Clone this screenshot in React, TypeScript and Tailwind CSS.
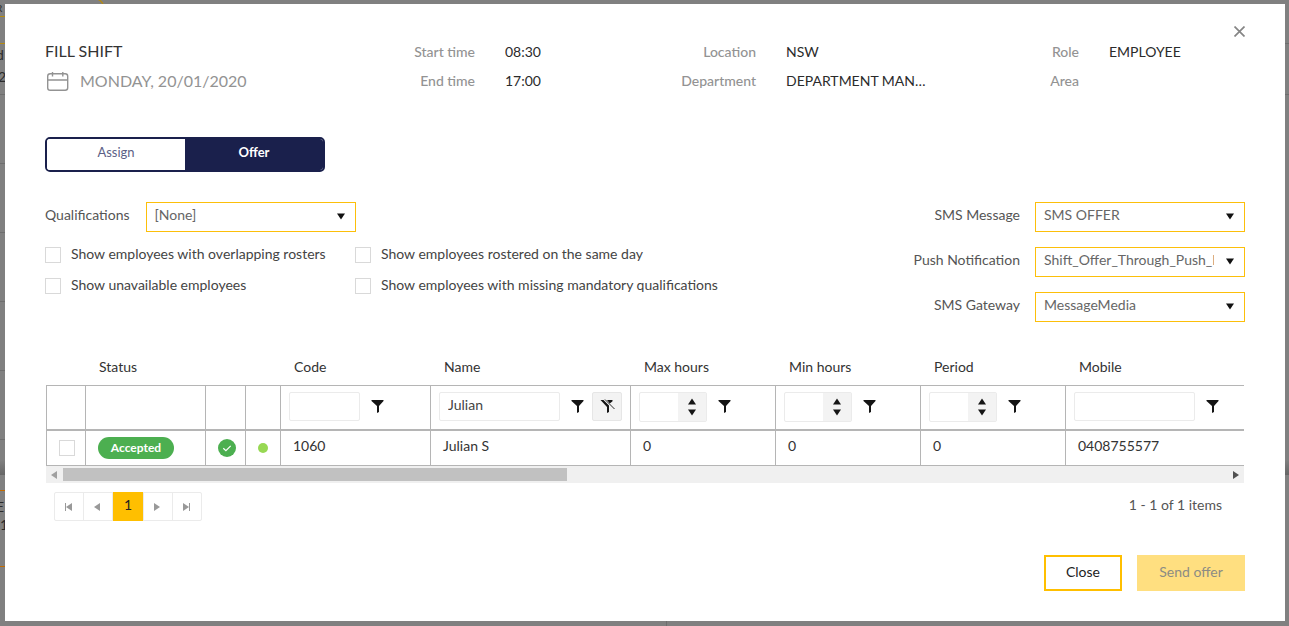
import React, { useState } from 'react'
import { clsx } from 'clsx'

const Caret = ({ className }: { className?: string }) => (
  <svg width="8" height="7" viewBox="0 0 8 7" className={className} aria-hidden="true">
    <path d="M0 0.5h8L4 6.5z" fill="currentColor" />
  </svg>
)

const FunnelIcon = () => (
  <svg width="13" height="14" viewBox="0 0 13 14" aria-hidden="true">
    <path d="M0.5 0h12v1L8 6v6L6 13V6L0.5 1z" fill="#151515" />
  </svg>
)

const FunnelClearIcon = () => (
  <svg width="15" height="15" viewBox="0 0 15 15" aria-hidden="true">
    <path d="M0.5 1h3l5.5 5.5V13L7 14V8z" fill="#151515" />
    <path d="M7 1h5.5v1.2L9.8 4.6z" fill="#151515" />
    <path d="M5 0.5l9.5 9.5" stroke="#151515" strokeWidth="0.9" fill="none" />
  </svg>
)

const CalendarIcon = () => (
  <svg width="25" height="24" viewBox="0 0 25 24" fill="none" stroke="#939393" strokeWidth="1.4" aria-hidden="true">
    <rect x="2.7" y="4.7" width="20" height="16.6" rx="2.5" />
    <path d="M2.7 11h20M7.5 3v4.5M17.8 3v4.5" />
  </svg>
)

interface DetailProps {
  rows: [string, string][]
}

function Detail({ rows }: DetailProps) {
  return (
    <dl>
      {rows.map(([label, value]) => (
        <div key={label} className="flex h-[29px] items-center gap-[30px]">
          <dt className="w-[120px] shrink-0 text-right font-medium text-[#939393]">{label}</dt>
          <dd className="max-w-36 truncate text-[#2b2b2b]">{value}</dd>
        </div>
      ))}
    </dl>
  )
}

interface SelectFieldProps {
  id: string
  label: string
  value: string
}

function SelectField({ id, label, value }: SelectFieldProps) {
  return (
    <>
      <label htmlFor={id} className="pb-1 text-[#555]">{label}</label>
      <div className="relative">
        <select
          id={id}
          className="block h-[30px] w-[210px] appearance-none border border-[#fcbf0a] bg-white pr-[30px] pb-1 pl-2 text-[#666] outline-none"
        >
          <option>{value}</option>
        </select>
        <Caret className="pointer-events-none absolute top-[11px] right-[11px] text-[#111]" />
      </div>
    </>
  )
}

const boxClass = 'block size-4 shrink-0 appearance-none border border-[#d9d9d9] bg-white checked:bg-[#ffbf00]'

function CheckOption({ label }: { label: string }) {
  return (
    <label className="flex h-[31px] items-center gap-2.5 text-[#444]">
      <input type="checkbox" className={boxClass} />
      <span className="pb-0.5">{label}</span>
    </label>
  )
}

interface TextFilterProps {
  label: string
  wide?: boolean
  value?: string
  clearable?: boolean
}

function TextFilter({ label, wide, value, clearable }: TextFilterProps) {
  return (
    <div className="flex items-center">
      <input
        aria-label={`${label} filter`}
        defaultValue={value}
        className={clsx('mr-[3px] h-[29px] rounded-xs border border-[#ebebeb] px-2 pb-1 text-[#444] outline-none', wide ? 'w-[121px]' : 'w-[71px]')}
      />
      <button aria-label={`Filter by ${label}`} className="flex h-[29px] w-[29px] items-center justify-center">
        <FunnelIcon />
      </button>
      {clearable && (
        <button aria-label="Clear filter" className="flex h-[29px] w-[30px] items-center justify-center rounded-xs border border-[#e6e6e6] bg-[#f3f3f3]">
          <FunnelClearIcon />
        </button>
      )}
    </div>
  )
}

function NumberFilter({ label }: { label: string }) {
  return (
    <div className="flex items-start">
      <div className="mr-[3px] flex h-[30px] w-[68px] rounded-xs border border-[#ebebeb]">
        <input aria-label={`${label} filter`} className="w-[38px] px-1 outline-none" />
        <div className="flex flex-1 flex-col items-center justify-center gap-1 bg-[#f3f3f3] text-[#151515]">
          <button aria-label="Increase"><Caret className="block rotate-180" /></button>
          <button aria-label="Decrease"><Caret className="block" /></button>
        </div>
      </div>
      <button aria-label={`Filter by ${label}`} className="flex h-[29px] w-[29px] items-center justify-center">
        <FunnelIcon />
      </button>
    </div>
  )
}

const columns = [
  { title: '', width: 'w-[39px]' },
  { title: 'Status', width: 'w-[120px]' },
  { title: '', width: 'w-[40px]' },
  { title: '', width: 'w-[35px]' },
  { title: 'Code', width: 'w-[150px]', filter: <TextFilter label="Code" /> },
  { title: 'Name', width: 'w-[200px]', filter: <TextFilter label="Name" wide value="Julian" clearable /> },
  { title: 'Max hours', width: 'w-[145px]', filter: <NumberFilter label="Max hours" /> },
  { title: 'Min hours', width: 'w-[145px]', filter: <NumberFilter label="Min hours" /> },
  { title: 'Period', width: 'w-[145px]', filter: <NumberFilter label="Period" /> },
  { title: 'Mobile', width: '', filter: <TextFilter label="Mobile" wide /> },
]

const employee = ['1060', 'Julian S', '0', '0', '0', '0408755577']

const line = 'border-[#b5b5b5]'

function EmployeeTable() {
  return (
    <table className="w-full table-fixed border-separate border-spacing-0">
      <thead>
        <tr className="h-[35px]">
          {columns.map((col, i) => (
            <th key={i} scope="col" className={clsx('p-0 pb-0.5 pl-3.5 text-left font-normal text-[#333]', col.width)}>
              {col.title}
            </th>
          ))}
        </tr>
        <tr className="h-[44px]">
          {columns.map((col, i) => (
            <td key={i} className={clsx('border-t border-l p-0 pt-1.5 pl-2 align-top', line)}>
              {col.filter}
            </td>
          ))}
        </tr>
      </thead>
      <tbody>
        <tr className="h-[37px]">
          <td className={clsx('border-t-2 border-b border-l p-0 pl-3', line)}>
            <input type="checkbox" aria-label="Select Julian S" className={boxClass} />
          </td>
          <td className={clsx('border-t-2 border-b border-l p-0 pl-3', line)}>
            <span className="block h-[22px] w-[76px] rounded-full bg-[#4caf50] text-center text-xs leading-[22px] font-bold text-white">
              Accepted
            </span>
          </td>
          <td className={clsx('border-t-2 border-b border-l p-0 pl-3', line)}>
            <svg width="18" height="18" viewBox="0 0 18 18" className="block" role="img" aria-label="Qualified">
              <circle cx="9" cy="9" r="9" fill="#4caf50" />
              <path d="M5.3 9.3l2.6 2.4 4.8-4.8" fill="none" stroke="#fff" strokeWidth="1.2" />
            </svg>
          </td>
          <td className={clsx('border-t-2 border-b border-l p-0 pl-3', line)}>
            <span className="block size-2.5 rounded-full bg-[#97d853]" />
          </td>
          {employee.map((text, i) => (
            <td key={i} className={clsx('border-t-2 border-b border-l p-0 pb-1 pl-3 text-[#333]', line)}>
              {text}
            </td>
          ))}
        </tr>
      </tbody>
    </table>
  )
}

const Arrow = ({ className }: { className?: string }) => (
  <svg width="6" height="8" viewBox="0 0 6 8" className={className} aria-hidden="true">
    <path d="M6 0v8L0 4z" fill="currentColor" />
  </svg>
)

function Pager() {
  const button = 'flex h-[29px] w-[30px] items-center justify-center border border-[#ebebeb] pr-0.5 text-[#999]'
  return (
    <nav aria-label="Pages" className="flex">
      <button aria-label="First page" className={clsx(button, '-mr-px rounded-l-xs')}>
        <span className="h-2 w-px bg-current" />
        <Arrow />
      </button>
      <button aria-label="Previous page" className={button}><Arrow /></button>
      <button aria-current="page" className="h-[29px] w-[30px] bg-[#ffbf00] pb-1 text-[#222]">1</button>
      <button aria-label="Next page" className={clsx(button, '-mr-px')}><Arrow className="rotate-180" /></button>
      <button aria-label="Last page" className={clsx(button, 'rounded-r-xs')}>
        <Arrow className="rotate-180" />
        <span className="h-2 w-px bg-current" />
      </button>
    </nav>
  )
}

// Slivers of the roster page that stay visible around the dialog
function RosterBackdrop() {
  return (
    <div aria-hidden="true" className="absolute inset-0 overflow-hidden text-[#2b2b2b]">
      <svg width="12" height="6" className="absolute top-0 left-24">
        <path d="M0 -1q4 0 7 5" fill="none" stroke="#b58a10" strokeWidth="1.3" />
      </svg>
      <div className="absolute top-[16px] h-px w-full bg-[linear-gradient(to_right,#b58a10_5px,transparent_5px)]" />
      <div className="absolute top-[43px] h-px w-full bg-[linear-gradient(to_right,#b58a10_5px,#6e6e6e_5px)]" />
      <div className="absolute top-[94px] h-px w-full bg-[#6e6e6e]" />
      <div className="absolute top-[163px] h-px w-[5px] bg-[#6e6e6e]" />
      <div className="absolute top-[232px] h-px w-[5px] bg-[#6e6e6e]" />
      <div className="absolute top-[301px] h-px w-[5px] bg-[#6e6e6e]" />
      <div className="absolute top-[370px] h-px w-[5px] bg-[#6e6e6e]" />
      <div className="absolute top-[439px] h-px w-[5px] bg-[#6e6e6e]" />
      <div className="absolute top-[460px] h-[15px] w-full bg-linear-to-b from-[#808080] to-[#666]" />
      <div className="absolute top-[490px] h-px w-[5px] bg-[#c26a00]" />
      <div className="absolute top-[566px] h-px w-[5px] bg-[#c26a00]" />
      <span className="absolute top-0 -left-1 text-[10px] leading-4">R</span>
      <span className="absolute top-[45px] -left-1 leading-5">d</span>
      <span className="absolute top-[67px] -left-0.5 leading-5">2</span>
      <span className="absolute top-[497px] -left-1 leading-5">E</span>
      <span className="absolute top-[515px] left-0 leading-5">1</span>
      <div className="absolute bottom-0 left-[666px] h-[5px] w-px bg-[#6e6e6e]" />
    </div>
  )
}

export default function App() {
  const [mode, setMode] = useState('Offer')

  return (
    <div className="relative min-h-screen bg-[#808080] pt-1 pr-1 pb-[5px] pl-[5px] font-[Lato,sans-serif] text-sm">
      <RosterBackdrop />
      <main className="relative bg-white px-10 pt-[33px] pb-[30px]">
        <button aria-label="Close dialog" className="absolute top-[22px] right-10">
          <svg width="11" height="11" viewBox="0 0 11 11" className="block">
            <path d="M0.5 0.5l10 10M10.5 0.5l-10 10" stroke="#858585" strokeWidth="1.7" />
          </svg>
        </button>

        <header className="grid grid-cols-[310fr_281fr_323fr_286fr]">
          <div>
            <h1 className="h-[29px] text-base leading-7 text-[#333]">FILL SHIFT</h1>
            <p className="flex h-[29px] items-center gap-2.5 text-base text-[#939393]">
              <CalendarIcon />
              MONDAY, 20/01/2020
            </p>
          </div>
          <Detail rows={[['Start time', '08:30'], ['End time', '17:00']]} />
          <Detail rows={[['Location', 'NSW'], ['Department', 'DEPARTMENT MANAGER']]} />
          <Detail rows={[['Role', 'EMPLOYEE'], ['Area', '']]} />
        </header>

        <div className="mt-[42px] flex h-[35px] w-[280px] overflow-hidden rounded-[5px] border-2 border-[#1a204c]">
          {['Assign', 'Offer'].map((name) => (
            <button
              key={name}
              onClick={() => setMode(name)}
              className={clsx('flex-1 pb-1 text-[13px]', mode === name ? 'bg-[#1a204c] font-bold text-white' : 'bg-white text-[#5c5f86]')}
            >
              {name}
            </button>
          ))}
        </div>

        <section className="mt-[30px] flex justify-between">
          <div>
            <div className="flex items-center gap-4">
              <SelectField id="qualifications" label="Qualifications" value="[None]" />
            </div>
            <div className="mt-[7px] grid grid-cols-[310px_auto]">
              <CheckOption label="Show employees with overlapping rosters" />
              <CheckOption label="Show employees rostered on the same day" />
              <CheckOption label="Show unavailable employees" />
              <CheckOption label="Show employees with missing mandatory qualifications" />
            </div>
          </div>
          <div className="grid grid-cols-[auto_auto] items-center justify-items-end gap-[15px]">
            <SelectField id="sms-message" label="SMS Message" value="SMS OFFER" />
            <SelectField id="push" label="Push Notification" value="Shift_Offer_Through_Push_Notification" />
            <SelectField id="gateway" label="SMS Gateway" value="MessageMedia" />
          </div>
        </section>

        <section className="mx-px mt-7">
          <EmployeeTable />
          <div className="flex h-[17px] items-center justify-between bg-[#f0f0f0] px-[5px]">
            <div className="flex flex-1 items-center gap-1.5">
              <Arrow className="text-[#a0a0a0]" />
              <div className="h-[13px] w-[42.6%] bg-[#c1c1c1]" />
            </div>
            <Arrow className="rotate-180 text-[#505050]" />
          </div>
          <div className="mt-[9px] flex items-center justify-between pr-[22px] pl-2">
            <Pager />
            <span className="pb-1 text-[#555]">1 - 1 of 1 items</span>
          </div>
        </section>

        <footer className="mt-[34px] flex justify-end gap-[15px]">
          <button className="h-9 w-[78px] border-2 border-[#ffbf00] pb-0.5 text-[#222]">Close</button>
          <button disabled className="h-9 w-[108px] bg-[#ffdf80] pb-0.5 text-[#8c8c84]">Send offer</button>
        </footer>
      </main>
    </div>
  )
}
